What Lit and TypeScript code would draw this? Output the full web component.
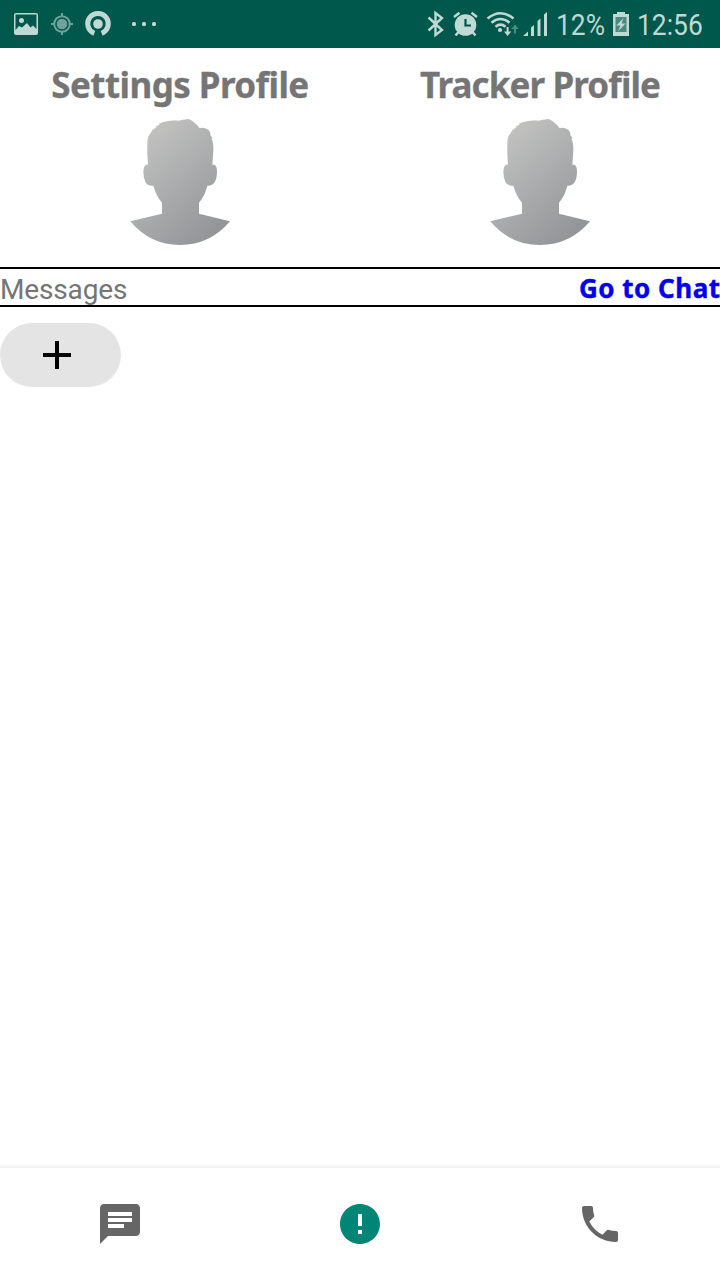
import { LitElement, html, css } from "lit";
import { customElement } from "lit/decorators.js";

@customElement("profile-card")
class ProfileCard extends LitElement {
  static properties = { label: {} };
  declare label: string;
  static styles = css`
    :host { display: flex; flex-direction: column; align-items: center; flex: 1; }
    .title { font: 700 35px/48px "Noto Sans", sans-serif; color: #757575; height: 49px; margin-top: 13px; white-space: nowrap; letter-spacing: var(--title-spacing, 0px); -webkit-text-stroke: 0.3px #757575; }
    svg { display: block; width: 120px; height: 145px; }
  `;
  render() {
    return html`
      <div class="title">${this.label}</div>
      <svg viewBox="0 0 360 435">
        <defs>
          <linearGradient id="g" gradientUnits="userSpaceOnUse" x1="60" y1="90" x2="300" y2="350">
            <stop offset="0" stop-color="#c1c1c0" /><stop offset="1" stop-color="#939598" />
          </linearGradient>
        </defs>
        <path fill="url(#g)" d="M84 164 Q81 135 82 100 Q82 79 92 69 Q98 57 110 52 L106 50 Q116 46 121 41 L113 42 Q130 34 149 32 L174 31 L169 34 Q190 28 206 27 Q226 36 239 55 Q246 51 261 57 Q272 62 271 76 Q276 81 279 86 L274 84 Q281 99 280 121 L277 164 Q291 162 291 184 Q291 205 284 217 Q277 228 262 227 Q256 255 237 278 L237 311 L330 334 Q270 405 180 405 Q90 405 31 334 L126 311 L126 278 Q107 255 100 227 Q83 229 76 216 Q70 203 70 184 Q71 162 84 164Z" />
      </svg>`;
  }
}

@customElement("status-bar")
class StatusBar extends LitElement {
  static styles = css`
    :host { display: flex; justify-content: space-between; height: 48px; background: #00574b; color: #bfd9d5; }
    .side { display: flex; height: 48px; }
    svg { display: block; height: 48px; flex: none; }
    .txt { font: 400 30px/50px Roboto, sans-serif; height: 48px; white-space: nowrap; }
    .txt span { display: inline-block; transform: scaleX(0.88); transform-origin: left; }
    .pct { width: 55px; }
    .time { width: 83px; }
  `;
  render() {
    return html`
      <div class="side">
        <svg width="165" viewBox="0 0 165 48" fill="currentColor">
          <path fill-rule="evenodd" d="M16 13H36Q38 13 38 15V33Q38 35 36 35H16Q14 35 14 33V15Q14 13 16 13ZM15.5 14.5V30L19 26L22 27.5L27 23L30.5 27.5L33 25.5L36.5 29V14.5Z" />
          <circle cx="21.500" cy="20.500" r="2.500" />
          <g opacity=".58">
            <circle cx="62" cy="24" r="5.300" />
            <circle cx="62" cy="24" r="7.800" fill="none" stroke="currentColor" stroke-width="2" />
            <path d="M61 13h2v4h-2zM61 31h2v4h-2zM51 23h4v2h-4zM69 23h4v2h-4z" />
          </g>
          <circle cx="98" cy="24" r="4.800" />
          <path d="M94.300 33.300A10.300 10.300 0 1 1 101.700 33.300" fill="none" stroke="currentColor" stroke-width="5" />
          <rect x="132" y="22" width="4" height="4" rx="1.500" /><rect x="142" y="22" width="4" height="4" rx="1.500" /><rect x="152" y="22" width="4" height="4" rx="1.500" />
        </svg>
      </div>
      <div class="side">
        <svg width="132" viewBox="424 0 132 48" fill="currentColor">
          <path d="M428.500 17.500L442 30L435.500 35V13L442 18L428.500 30.500" fill="none" stroke="currentColor" stroke-width="2.400" />
          <circle cx="465.500" cy="25" r="10.800" />
          <path d="M465.500 19V25.500H471" fill="none" stroke="#00574b" stroke-width="2.200" />
          <path d="M454 17L459.500 12.800M477 17L471.500 12.800M458.500 32L455.500 35.500M472.500 32L475.500 35.500" fill="none" stroke="currentColor" stroke-width="2.500" />
          <path d="M487.500 18.500Q500.500 8 513.500 18.500M491.500 22.700Q500.500 15.300 509.500 22.700M495.500 26.700Q500.500 22.500 505.500 26.700" fill="none" stroke="currentColor" stroke-width="2.600" />
          <circle cx="500" cy="30" r="2.100" />
          <path d="M506.600 27h2v4.500h2.700L507.600 36L504 31.500h2.600z" />
          <path opacity=".4" d="M514 33.500h2V29h2.700L515 24.500L511.300 29H514z" />
          <path d="M523 36L528 31.500V36zM531 27.500L534 25V36H531zM537.500 21L540.500 18.500V36H537.500zM544 14.500L547 12V36H544z" />
        </svg>
        <div class="txt pct"><span>12%</span></div>
        <svg width="26" viewBox="611 0 26 48" fill="currentColor">
          <path d="M617 12h8v2h4v22h-16V14h4z" />
          <path fill="#4a8880" d="M615.500 17h11v15h-11z" />
          <path d="M623.500 18L616.500 25.500H620.500L618 31.500L625.500 23.500H621.500Z" />
        </svg>
        <div class="txt time"><span>12:56</span></div>
      </div>`;
  }
}

@customElement("app-root")
class AppRoot extends LitElement {
  static styles = css`
    :host { display: flex; flex-direction: column; width: 720px; height: 1280px; background: #fff; overflow: hidden; }
    .profiles { display: flex; height: 219px; }
    .settings { --title-spacing: -0.57px; }
    .tracker { --title-spacing: -0.9px; }
    .messages { display: flex; justify-content: space-between; height: 36px; border-top: 2px solid #000; border-bottom: 2px solid #000; }
    .label { font: 400 28px/41px Roboto, sans-serif; color: #757575; letter-spacing: -0.15px; }
    .link { font: 700 26px/38px "Noto Sans", sans-serif; color: #0000ee; text-decoration: none; white-space: nowrap; letter-spacing: 0.5px; margin-right: -0.5px; -webkit-text-stroke: 0.4px #0000ee; }
    .add { margin: 16px 0 0; padding: 0; border: 0; width: 121px; height: 64px; border-radius: 32px; background: #e4e4e4; }
    .add svg { display: block; margin-left: 43px; }
    .body { flex: 1; }
    .shade { height: 4px; background: linear-gradient(#fefefe, #f1f1f1); }
    nav { display: flex; height: 112px; }
    .tab { flex: 1; display: flex; align-items: center; justify-content: center; }
    .tab svg { display: block; }
  `;
  render() {
    return html`
      <status-bar></status-bar>
      <div class="profiles">
        <profile-card class="settings" label="Settings Profile"></profile-card>
        <profile-card class="tracker" label="Tracker Profile"></profile-card>
      </div>
      <div class="messages">
        <span class="label">Messages</span>
        <a class="link">Go to Chat</a>
      </div>
      <main class="body">
        <button class="add" aria-label="Add">
          <svg width="28" height="28" viewBox="0 0 28 28"><path d="M12 0h4v12h12v4H16v12h-4V16H0v-4h12z" /></svg>
        </button>
      </main>
      <div class="shade"></div>
      <nav>
        <div class="tab"><svg width="48" height="48" viewBox="0 0 24 24" fill="#666"><path d="M20 2H4c-1.100 0-1.990.9-1.990 2L2 22l4-4h14c1.100 0 2-.9 2-2V4c0-1.100-.9-2-2-2zM6 9h12v2H6V9zm8 5H6v-2h8v2zm4-6H6V6h12v2z" /></svg></div>
        <div class="tab"><svg width="48" height="48" viewBox="0 0 24 24" fill="#008577"><path d="M12 2C6.480 2 2 6.480 2 12s4.480 10 10 10 10-4.480 10-10S17.520 2 12 2zm1 15h-2v-2h2v2zm0-4h-2V7h2v6z" /></svg></div>
        <div class="tab"><svg width="48" height="48" viewBox="0 0 24 24" fill="#666"><path d="M6.620 10.790c1.440 2.830 3.760 5.140 6.590 6.590l2.200-2.200c.27-.27.67-.36 1.020-.24 1.120.37 2.330.57 3.570.57.55 0 1 .45 1 1V20c0 .55-.45 1-1 1-9.390 0-17-7.610-17-17 0-.55.45-1 1-1h3.500c.55 0 1 .45 1 1 0 1.250.2 2.450.57 3.570.11.35.03.74-.25 1.020l-2.200 2.200z" /></svg></div>
      </nav>`;
  }
}
